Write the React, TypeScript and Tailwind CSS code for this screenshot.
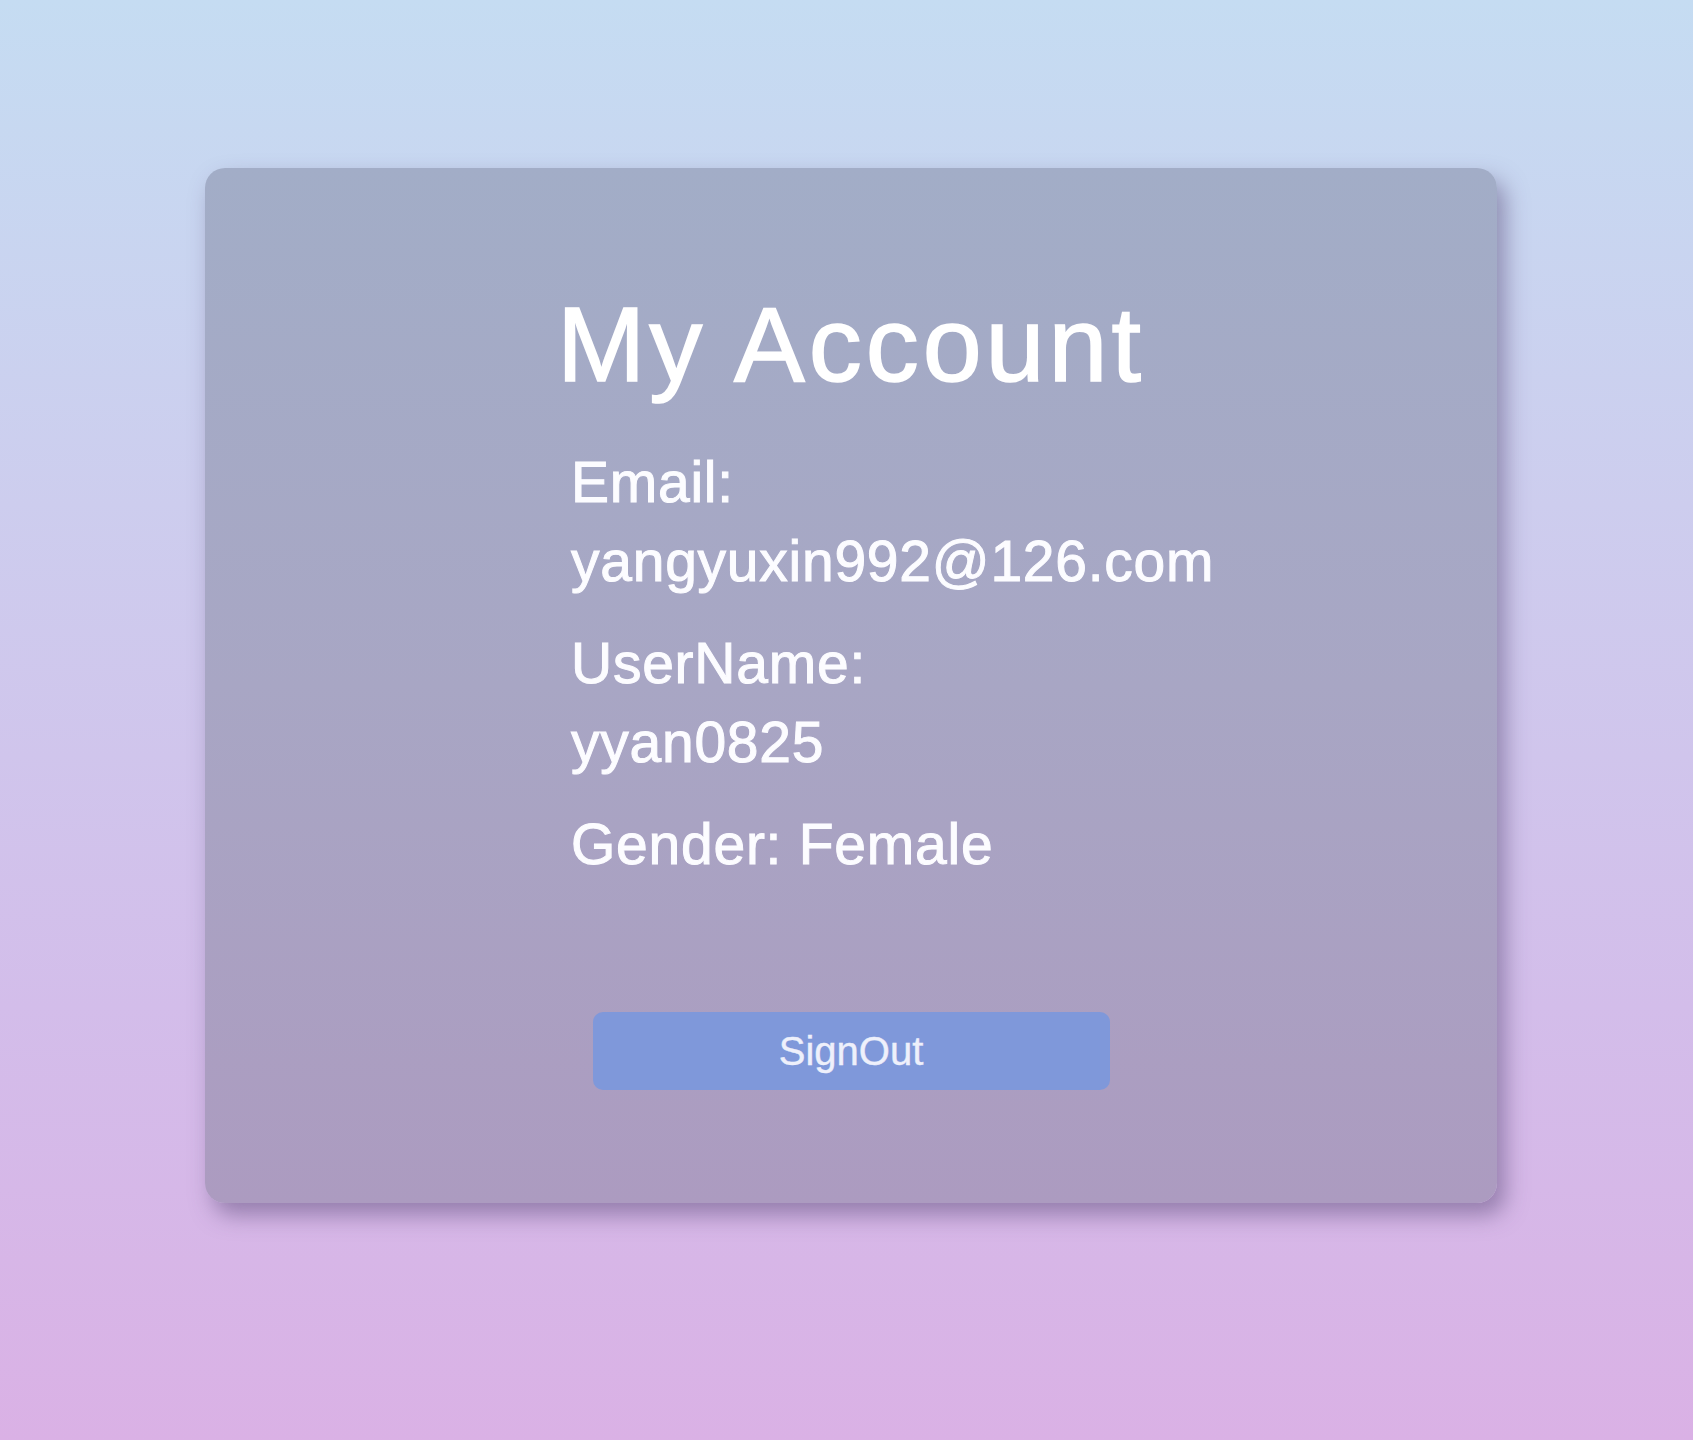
export default function App() {
  return (
    <div
      className="w-full h-[1440px] pt-[168px] pl-[9px] flex justify-center bg-[linear-gradient(180deg,#c5dcf2_0%,#cdcdee_35%,#d3bdea_70%,#dab1e5_100%)]"
      style={{ fontFamily: '"Liberation Sans", Arial, sans-serif' }}
    >
      <div className="w-[1292px] h-[1035px] rounded-[20px] bg-[linear-gradient(180deg,#a2adc7_0%,#a8a6c4_50%,#ac9bc0_100%)] shadow-[8px_12px_22px_rgba(85,70,115,0.5)] pt-[116px] flex flex-col items-center">
        <div className="w-[590px] flex flex-col">
          <h1 className="text-[106px] leading-[120px] tracking-[4px] text-white text-center whitespace-nowrap [-webkit-text-stroke:1.6px_#ffffff]">
            My Account
          </h1>
          <div className="mt-[39px] pl-[15px] flex flex-col gap-[23px] text-[57px] leading-[79px] tracking-[0.75px] text-[#fcfcff] [-webkit-text-stroke:1px_#fcfcff]">
            <div className="flex flex-col whitespace-nowrap">
              <span>Email:</span>
              <span>yangyuxin992@126.com</span>
            </div>
            <div className="flex flex-col whitespace-nowrap">
              <span>UserName:</span>
              <span>yyan0825</span>
            </div>
            <div className="whitespace-nowrap">Gender: Female</div>
          </div>
        </div>
        <button className="mt-[128px] w-[517px] h-[78px] rounded-[10px] bg-[#7f98da] text-[#eef0fb] text-[40px] leading-none [-webkit-text-stroke:0.4px_#eef0fb]">
          SignOut
        </button>
      </div>
    </div>
  );
}
